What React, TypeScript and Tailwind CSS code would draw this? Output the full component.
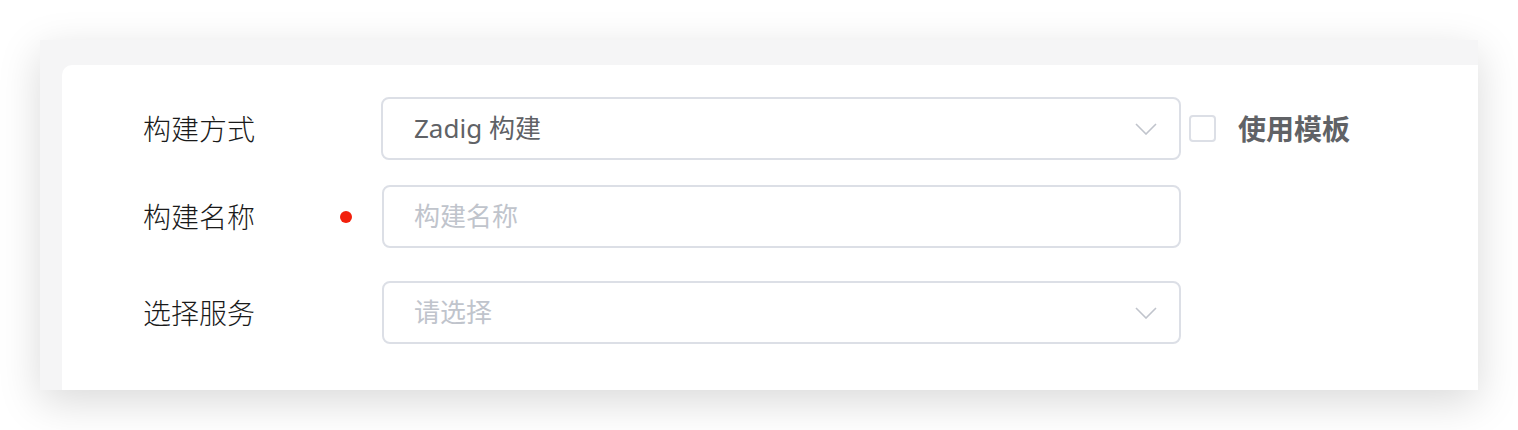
import React from "react";

const font = { fontFamily: '"Noto Sans", "Noto Sans CJK SC", sans-serif' };

function Chevron() {
  return (
    <svg width="22" height="12" viewBox="0 0 22 12" fill="none" className="flex-none">
      <path d="M1 1L11 11L21 1" stroke="#c0c4cc" strokeWidth="1.6" />
    </svg>
  );
}

export default function App() {
  return (
    <div className="w-[1518px] h-[430px] bg-white pt-[40px] pl-[40px] overflow-hidden" style={font}>
      <div className="w-[1438px] h-[350px] bg-[#f5f5f6] shadow-[0_12px_40px_rgba(0,0,0,0.15)] pl-[22px] pt-[25px]">
        <div className="h-full bg-white rounded-tl-[10px] pl-[81px] pt-[32px]">
          {/* 构建方式 */}
          <div className="flex items-center h-[63px]">
            <div className="w-[238px] flex-none text-[28px] font-light text-[#1a1a1a]">构建方式</div>
            <div className="w-[800px] h-[63px] border-2 border-[#dcdfe6] rounded-[8px] flex items-center justify-between pl-[31px] pr-[22px]">
              <span className="text-[26px] text-[#606266]">Zadig 构建</span>
              <Chevron />
            </div>
            <div className="ml-[8px] w-[27px] h-[27px] border-2 border-[#dcdfe6] rounded-[4px] flex-none" />
            <span className="ml-[22px] text-[28px] font-bold text-[#606266]">使用模板</span>
          </div>

          {/* 构建名称 */}
          <div className="flex items-center h-[63px] mt-[25px]">
            <div className="w-[239px] flex-none flex items-center justify-between pr-[30px] text-[28px] font-light text-[#1a1a1a]">
              <span>构建名称</span>
              <span className="w-[12px] h-[12px] rounded-full bg-[#f2200c]" />
            </div>
            <div className="w-[799px] h-[63px] border-2 border-[#dcdfe6] rounded-[8px] flex items-center pl-[30px]">
              <span className="text-[26px] text-[#c0c4cc]">构建名称</span>
            </div>
          </div>

          {/* 选择服务 */}
          <div className="flex items-center h-[63px] mt-[33px]">
            <div className="w-[239px] flex-none text-[28px] font-light text-[#1a1a1a]">选择服务</div>
            <div className="w-[799px] h-[63px] border-2 border-[#dcdfe6] rounded-[8px] flex items-center justify-between pl-[30px] pr-[22px]">
              <span className="text-[26px] text-[#c0c4cc]">请选择</span>
              <Chevron />
            </div>
          </div>
        </div>
      </div>
    </div>
  );
}
